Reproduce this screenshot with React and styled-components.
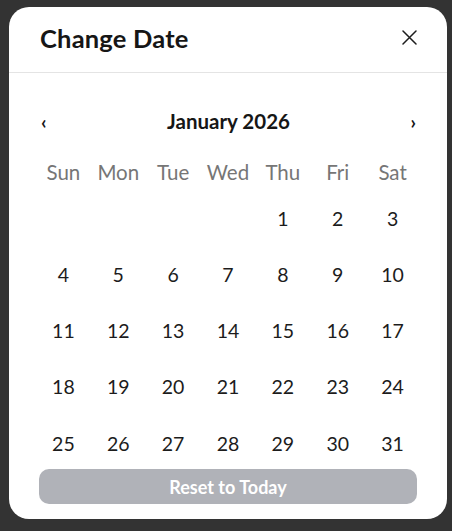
import React from "react";
import styled, { createGlobalStyle } from "styled-components";

const Global = createGlobalStyle`
  html, body { margin: 0; padding: 0; background: #333333; }
  body { font-family: "Lato", "Noto Sans", sans-serif; }
  * { box-sizing: border-box; }
`;

const Backdrop = styled.div`
  min-height: 531px;
  padding: 7px 5px 0 9px;
`;

const Modal = styled.div`
  width: 438px;
  background: #ffffff;
  border-radius: 20px;
  overflow: hidden;
  display: flex;
  flex-direction: column;
`;

const Header = styled.div`
  height: 66px;
  display: flex;
  align-items: center;
  justify-content: space-between;
  padding: 0 28px 4px 31px;
  border-bottom: 1px solid #e4e4e4;
`;

const Title = styled.h2`
  margin: 0;
  font-size: 25.5px;
  font-weight: 700;
  color: #161616;
  letter-spacing: 0.2px;
`;

const CloseButton = styled.button`
  width: 20px;
  height: 20px;
  padding: 0;
  border: none;
  background: none;
  display: flex;
  align-items: center;
  justify-content: center;
  color: #1d1d1d;
`;

const Body = styled.div`
  padding: 33px 27px 0;
`;

const Nav = styled.div`
  height: 30px;
  display: flex;
  align-items: center;
  justify-content: space-between;
  padding: 0 4px 0 5px;
  margin-bottom: 18px;
`;

const Arrow = styled.button`
  border: none;
  background: none;
  padding: 0;
  font-family: inherit;
  font-size: 19px;
  font-weight: 700;
  color: #161616;
  line-height: 1;
`;

const Month = styled.div`
  font-size: 20.5px;
  font-weight: 700;
  color: #161616;
`;

const Grid = styled.div`
  display: grid;
  grid-template-columns: repeat(7, 1fr);
  grid-auto-rows: ${(p) => p.$row}px;
  row-gap: ${(p) => p.$gap}px;
  margin-bottom: ${(p) => p.$after}px;
`;

const Weekday = styled.div`
  display: flex;
  align-items: center;
  justify-content: center;
  font-size: 20.5px;
  color: #767676;
`;

const Day = styled.div`
  display: flex;
  align-items: center;
  justify-content: center;
  font-size: 19.5px;
  color: #1c1c1c;
`;

const Footer = styled.div`
  padding: 4px 30px 15px;
`;

const ResetButton = styled.button`
  width: 100%;
  height: 35px;
  border: none;
  border-radius: 10px;
  background: #b0b2b8;
  color: #ffffff;
  font-family: inherit;
  font-size: 18px;
  font-weight: 700;
`;

const weekdays = ["Sun", "Mon", "Tue", "Wed", "Thu", "Fri", "Sat"];

function buildDays(year, month) {
  const first = new Date(year, month, 1).getDay();
  const count = new Date(year, month + 1, 0).getDate();
  const cells = [];
  for (let i = 0; i < first; i++) cells.push(null);
  for (let d = 1; d <= count; d++) cells.push(d);
  return cells;
}

export default function App() {
  const days = buildDays(2026, 0);
  return (
    <>
      <Global />
      <Backdrop>
        <Modal>
          <Header>
            <Title>Change Date</Title>
            <CloseButton aria-label="Close">
              <svg width="15" height="15" viewBox="0 0 15 15" fill="none">
                <path d="M1 1L14 14M14 1L1 14" stroke="currentColor" strokeWidth="1.5" strokeLinecap="round" />
              </svg>
            </CloseButton>
          </Header>
          <Body>
            <Nav>
              <Arrow>‹</Arrow>
              <Month>January 2026</Month>
              <Arrow>›</Arrow>
            </Nav>
            <Grid $row={36} $gap={0} $after={6}>
              {weekdays.map((w) => (
                <Weekday key={w}>{w}</Weekday>
              ))}
            </Grid>
            <Grid $row={44} $gap={12.25} $after={0}>
              {days.map((d, i) => (
                <Day key={i}>{d}</Day>
              ))}
            </Grid>
          </Body>
          <Footer>
            <ResetButton>Reset to Today</ResetButton>
          </Footer>
        </Modal>
      </Backdrop>
    </>
  );
}
